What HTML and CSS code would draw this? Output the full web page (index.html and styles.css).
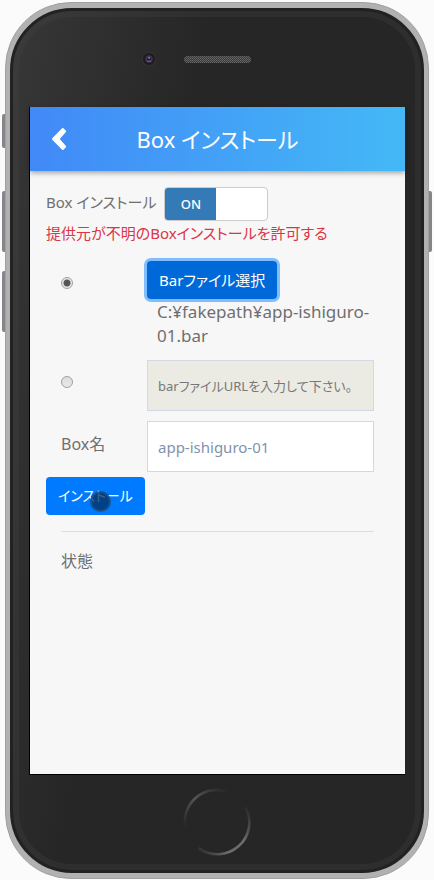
FILE: index.html
```html
<!DOCTYPE html>
<html lang="ja">
<head>
<meta charset="utf-8">
<meta name="viewport" content="width=device-width, initial-scale=1">
<title>Box インストール</title>
<link rel="stylesheet" href="styles.css">
</head>
<body>
<div class="phone">
  <span class="key key-mute"></span>
  <span class="key key-up"></span>
  <span class="key key-down"></span>
  <span class="key key-power"></span>
  <div class="bezel">
    <div class="sensors">
      <svg class="camera" width="16" height="16" viewBox="0 0 16 16" aria-hidden="true">
        <circle cx="8" cy="8" r="7.5" fill="#303030"/>
        <circle cx="8" cy="8" r="6" fill="#1c1b1d"/>
        <circle cx="8" cy="8" r="3.8" fill="#3f3157"/>
        <circle cx="8" cy="8" r="2" fill="#211b35"/>
        <circle cx="8" cy="6.8" r="1" fill="#857b98"/>
        <path d="M6 10.2h4" stroke="#75658d" stroke-width="1"/>
      </svg>
      <svg class="speaker" width="67" height="7" viewBox="0 0 67 7" aria-hidden="true">
        <defs>
          <pattern id="mesh" width="2" height="2" patternUnits="userSpaceOnUse">
            <rect width="2" height="2" fill="#3c3c3c"/>
            <rect width="1" height="1" fill="#666"/>
            <rect x="1" y="1" width="1" height="1" fill="#5c5c5c"/>
          </pattern>
        </defs>
        <rect width="67" height="7" rx="3.5" fill="url(#mesh)"/>
      </svg>
    </div>

    <div class="screen">
      <header class="bar">
        <button class="back" type="button" aria-label="戻る">
          <svg width="16" height="24" viewBox="0 0 16 24" aria-hidden="true">
            <path d="M11.800 2 14.200 4.400 7.300 12l6.900 7.600-2.400 2.400L2 12z" fill="#fff" stroke="#fff" stroke-width="2" stroke-linejoin="round"/>
          </svg>
        </button>
        <h1 class="title">Box インストール</h1>
      </header>

      <form class="content">
        <div class="permission">
          <label for="allow">Box インストール</label>
          <span class="switch">
            <input id="allow" type="checkbox" checked>
            <span class="switch-on">ON</span>
          </span>
        </div>
        <p class="warning">提供元が不明のBoxインストールを許可する</p>

        <div class="row">
          <input class="radio" type="radio" name="source" aria-label="Barファイル選択" checked>
          <div>
            <button class="btn btn-focus" type="button">Barファイル選択</button>
            <p class="path">C:¥fakepath¥app-ishiguro-01.bar</p>
          </div>
        </div>
        <div class="row">
          <input class="radio" type="radio" name="source" aria-label="barファイルURL">
          <input class="field field-off" type="text" placeholder="barファイルURLを入力して下さい。" aria-label="barファイルURL" disabled>
        </div>
        <div class="row">
          <label class="name" for="box-name">Box名</label>
          <input class="field" id="box-name" type="text" value="app-ishiguro-01">
        </div>

        <button class="btn install" type="button">インストール<span class="touch"></span></button>
        <div class="status">状態</div>
      </form>
    </div>

    <svg class="home" width="68" height="68" viewBox="0 0 68 68" aria-hidden="true">
      <defs>
        <linearGradient id="arc-top" x1="0" y1="1" x2="1" y2="0">
          <stop offset="0" stop-color="#555" stop-opacity="0"/>
          <stop offset=".5" stop-color="#555"/>
          <stop offset="1" stop-color="#555" stop-opacity="0"/>
        </linearGradient>
        <linearGradient id="arc-bottom" x1="1" y1="0" x2="0" y2="1">
          <stop offset="0" stop-color="#666" stop-opacity="0"/>
          <stop offset=".4" stop-color="#6c6c6c"/>
          <stop offset=".7" stop-color="#6c6c6c"/>
          <stop offset="1" stop-color="#666" stop-opacity="0"/>
        </linearGradient>
      </defs>
      <path d="M2.2 39A32 32 0 0 1 44 3.6" fill="none" stroke="url(#arc-top)" stroke-width="2.6"/>
      <path d="M62.5 19A32 32 0 0 1 15.5 60.1" fill="none" stroke="url(#arc-bottom)" stroke-width="2.6"/>
    </svg>
  </div>
</div>
</body>
</html>
```
FILE: styles.css
```css
* {
  box-sizing: border-box;
}

body {
  margin: 0;
  padding: 2px 5px 1px;
  background: #fbfbfb;
  color: #6f6f6f;
  font-family: "Noto Sans", "Noto Sans CJK JP", sans-serif;
  font-size: 15px;
  line-height: 24px;
  font-feature-settings: "palt";
}

button,
input {
  font: inherit;
  font-feature-settings: inherit;
}

p,
h1 {
  margin: 0;
  font-weight: 400;
}

.phone {
  position: relative;
  display: flex;
  min-height: calc(100vh - 3px);
  border: 1px solid #a0a0a0;
  border-radius: 66px;
  background: #b1b1b1;
  padding: 5px 4px;
}

.bezel {
  flex: 1;
  display: flex;
  flex-direction: column;
  min-width: 0;
  border: 3px solid #222;
  border-radius: 62px;
  padding: 0 16px;
  background: linear-gradient(100deg, #373737 0, #262626 35%);
  box-shadow: inset 0 0 0 6px rgba(70, 70, 70, .25);
}

.key {
  position: absolute;
  left: -4px;
  width: 3px;
  border-radius: 2px 0 0 2px;
  background: #85858a;
}

.key-mute {
  top: 111px;
  height: 34px;
}

.key-up {
  top: 188px;
  height: 61px;
}

.key-down {
  top: 268px;
  height: 61px;
}

.key-power {
  top: 188px;
  left: auto;
  right: -4px;
  height: 61px;
  border-radius: 0 2px 2px 0;
}

.sensors {
  display: grid;
  grid-template-columns: 1fr 67px 1fr;
  align-items: center;
  height: 96px;
}

.camera {
  justify-self: end;
  margin-right: 27px;
}

.screen {
  flex: 1;
  border: solid #000;
  border-width: 0 0 1px 1px;
  background: #f7f7f7;
}

.bar {
  display: grid;
  grid-template-columns: 48px 1fr 48px;
  align-items: center;
  height: 64px;
  background: linear-gradient(90deg, #4189f7, #44b9f6);
  box-shadow: 0 2px 5px rgba(0, 0, 0, .35);
}

.back {
  display: flex;
  justify-content: flex-end;
  border: 0;
  padding: 0 11px 0 0;
  background: none;
}

.title {
  color: #fff;
  font-size: 22px;
  line-height: 32px;
  text-align: center;
}

.content {
  padding: 16px;
}

.permission {
  display: flex;
  gap: 8px;
}

.permission label {
  line-height: 30px;
}

.switch {
  position: relative;
  display: flex;
  width: 104px;
  height: 34px;
  border: 1px solid #ccc;
  border-radius: 4px;
  overflow: hidden;
  background: #fff;
}

.switch input {
  position: absolute;
  inset: 0;
  width: 100%;
  height: 100%;
  margin: 0;
  opacity: 0;
}

.switch-on {
  width: 50%;
  background: #337ab7;
  color: #fff;
  font-size: 13px;
  font-weight: 500;
  line-height: 33px;
  text-align: center;
}

.warning {
  margin-bottom: 16px;
  color: #dc3545;
}

.row {
  display: grid;
  grid-template-columns: 86px 1fr;
  align-items: start;
  margin-bottom: 10px;
  padding: 0 15px;
}

.radio {
  appearance: none;
  width: 12px;
  height: 12px;
  margin: 16px 0 0;
  border: 1px solid #a0a0a0;
  border-radius: 50%;
  background: linear-gradient(#ddd, #e9e9e9);
}

.radio:checked {
  background: radial-gradient(circle, #555 0 3px, #e6e6e6 4px);
}

.btn {
  position: relative;
  display: block;
  height: 38px;
  border: 0;
  border-radius: 4px;
  padding: 0 12px;
  background: #007bff;
  color: #fff;
}

.btn-focus {
  background: #0069d9;
  box-shadow: 0 0 0 3px #80bdff;
}

.path {
  margin-bottom: 2px;
  padding: 1px 0 0 10px;
  font-size: 17px;
  overflow-wrap: anywhere;
}

.field {
  width: 100%;
  height: 51px;
  border: 1px solid #d3d8e4;
  border-radius: 0;
  padding: 0 10px;
  background: #fff;
  color: #8292ad;
}

.field-off {
  background: #ebebe4;
  font-size: 13px;
}

.field::placeholder {
  color: #777;
  opacity: 1;
}

.name {
  padding-top: 11px;
  font-size: 16px;
}

.install {
  margin-top: -5px;
  font-size: 14px;
}

.touch {
  position: absolute;
  left: 44px;
  top: 14px;
  width: 21px;
  height: 21px;
  border: 2px solid rgba(40, 90, 140, .7);
  border-radius: 50%;
  background: rgba(0, 45, 95, .75);
}

.status {
  margin: 16px 15px 0;
  border-top: 1px solid #dcdddf;
  padding-top: 17px;
  font-size: 16px;
}

.home {
  flex: none;
  align-self: center;
  margin: 13px 0 14px;
}
```
